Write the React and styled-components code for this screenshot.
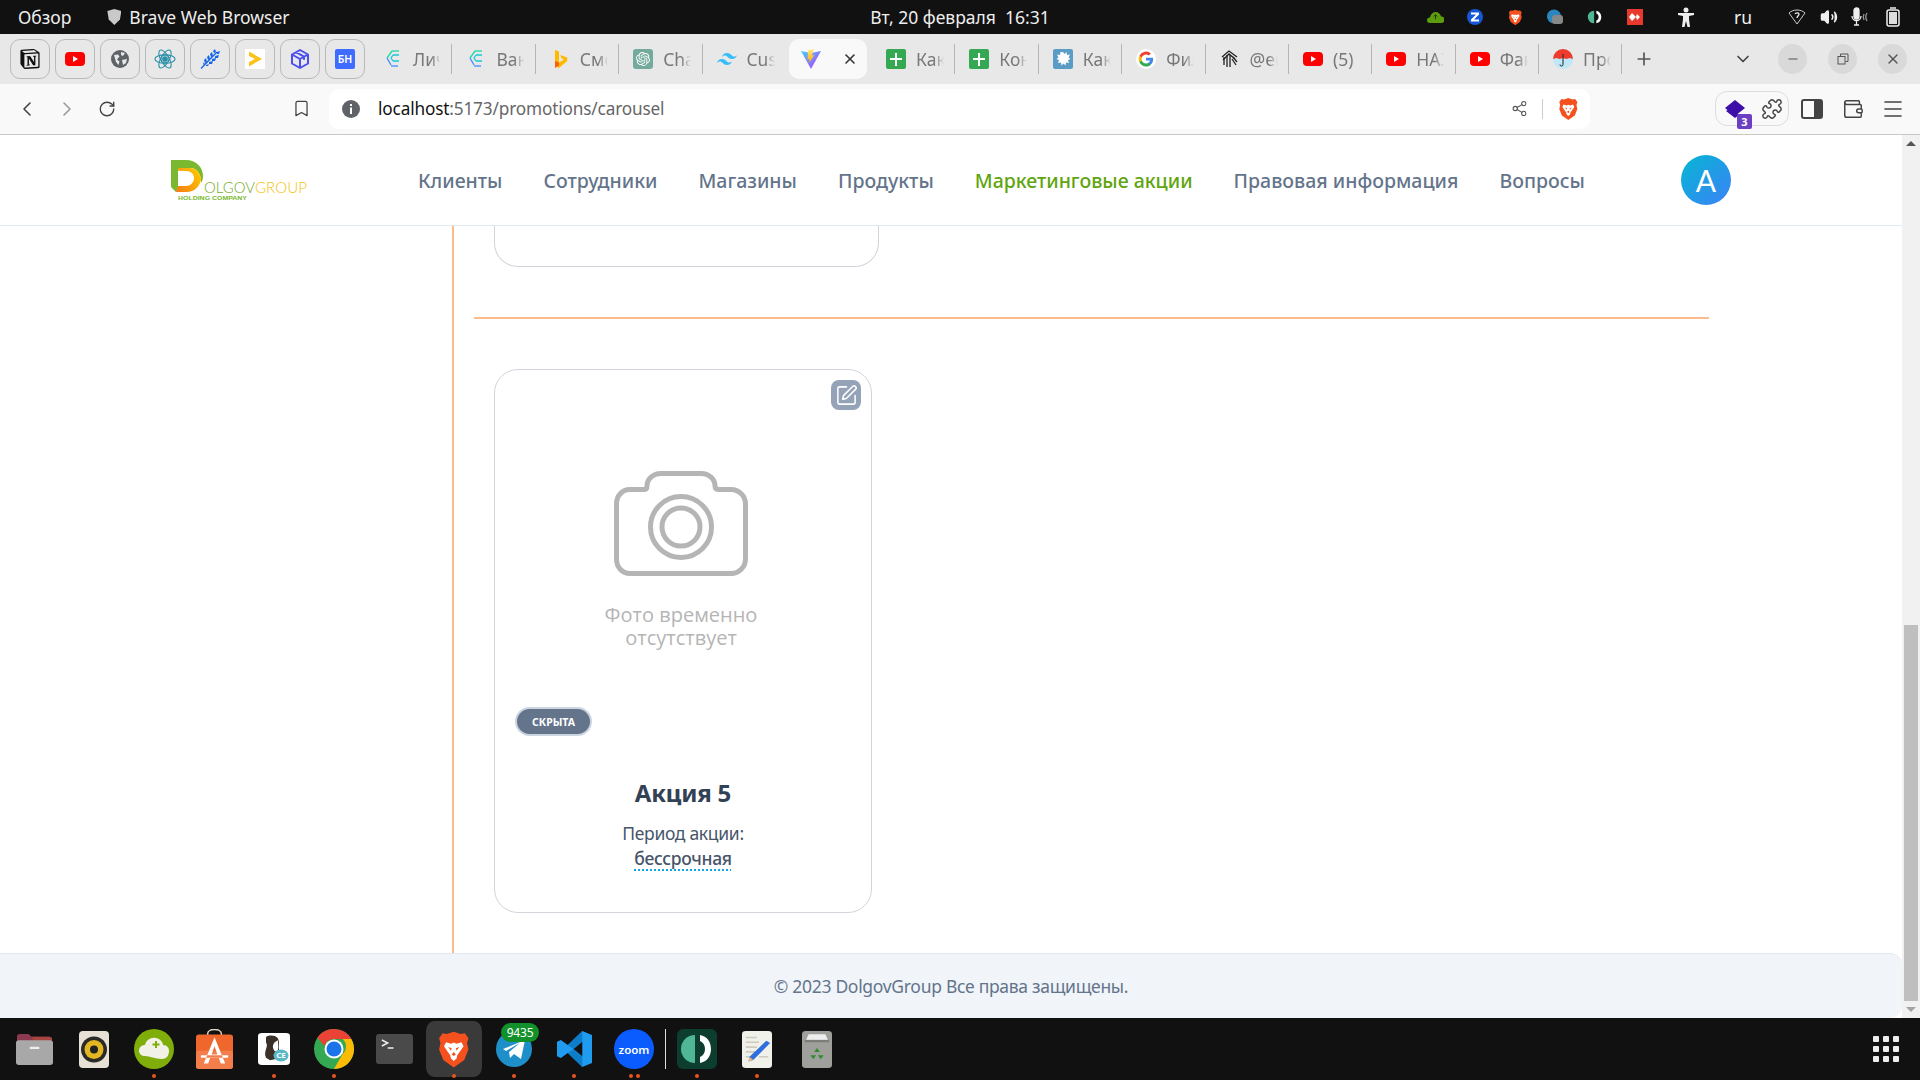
import React from 'react';
import styled, { createGlobalStyle } from 'styled-components';
import { ChevronLeft, ChevronRight, ChevronDown, RotateCw, Bookmark, Share2, Plus, X, Minus, SquarePen, Volume2, Mic, Puzzle, Menu, Wallet } from 'lucide-react';
import { SiNotion, SiOpenai, SiTailwindcss } from 'react-icons/si';

const UI = '"Noto Sans", "Open Sans", sans-serif';

const Global = createGlobalStyle`
  html, body { margin: 0; padding: 0; background: #111; overflow: hidden; }
  * { box-sizing: border-box; }
  body { font-family: ${UI}; }
`;

/* ---------- drawn icons ---------- */
const Yt = ({ s = 20 }) => (
  <svg width={s} height={s} viewBox="0 0 20 20"><rect y="3" width="20" height="14" rx="4" fill="#f00" /><path d="M8 7l5 3-5 3z" fill="#fff" /></svg>
);
const Sheet = ({ s = 20 }) => (
  <svg width={s} height={s} viewBox="0 0 20 20"><rect width="20" height="20" rx="2" fill="#34a853" /><path d="M9 4h2v5h5v2h-5v6H9v-6H4V9h5z" fill="#fff" /></svg>
);
const Brave = ({ s = 20 }) => (
  <svg width={s * 0.86} height={s} viewBox="0 0 24 24" preserveAspectRatio="none">
    <path d="M12 1l5 1.500L20 2l2.500 3-1 3 1 4-3 6.500L12 23l-7.500-4.500L1.500 12l1-4-1-3L4 2l3 .5z" fill="#f4511e" />
    <path d="M6.500 7.500L10 8.500l2-.8 2 .8 3.500-1 1.500 2.500-2.800 3.500-1.700 2-.5 2L12 19l-2-1.500-.5-2-1.700-2L5 10z" fill="#fff" />
    <path d="M8 10.500l2.500.7-.5 1.500zM16 10.500l-2.500.7.500 1.500zM10.500 15l1.500-1.500 1.500 1.500-1.500 1z" fill="#f4511e" />
  </svg>
);
const Bracket = ({ s = 20, bg }) => (
  <svg width={s} height={s} viewBox="0 0 20 20">
    {bg && <rect width="20" height="20" rx="3" fill={bg} />}
    <path d="M9 3a7 7 0 0 0 0 14z" fill="#4fb795" />
    <path d="M11.500 3c3.500.6 5.500 3.500 5.500 7s-2 6.400-5.500 7l0-3c1.500-.6 2.500-2 2.500-4s-1-3.400-2.500-4z" fill="#fff" />
  </svg>
);
const Vite = ({ s = 20 }) => (
  <svg width={s} height={s} viewBox="0 0 20 20">
    <defs>
      <linearGradient id="vt" x1="0" y1="0" x2="1" y2="1"><stop offset="0" stopColor="#41d1ff" /><stop offset="1" stopColor="#bd34fe" /></linearGradient>
      <linearGradient id="vb" x1="0" y1="0" x2="0" y2="1"><stop offset="0" stopColor="#ffea83" /><stop offset="1" stopColor="#ffa800" /></linearGradient>
    </defs>
    <path d="M0 2l10 2 10-2-10 18z" fill="url(#vt)" />
    <path d="M13 0L7 1.500l-.5 9 2-.5-.5 4 5.500-8-2.500.5z" fill="url(#vb)" />
  </svg>
);
const Splat = () => (
  <svg width="20" height="20" viewBox="0 0 20 20">
    <rect width="20" height="20" rx="2" fill="#5a9cc5" />
    <path d="M10 3l1.500 2 2-2 .5 3 3-.5-1.500 3 2 1.500-2.500 1 1 3-3-.5-.5 3-2-2-2 2-.5-3-3 .5 1-3-2.500-1 2-1.500-1.500-3 3 .5.500-3z" fill="#fff" />
  </svg>
);
const Google = () => (
  <svg width="20" height="20" viewBox="0 0 24 24">
    <circle cx="12" cy="12" r="12" fill="#fff" />
    <path d="M20.600 12.200c0-.6-.1-1.200-.2-1.700H12v3.300h4.800a4.100 4.100 0 0 1-1.800 2.700v2.200h2.900c1.700-1.600 2.700-3.900 2.700-6.500z" fill="#4285f4" />
    <path d="M12 21c2.400 0 4.500-.8 5.900-2.200L15 16.500c-.8.500-1.800.9-3 .9-2.300 0-4.300-1.600-5-3.700H4.100V16A9 9 0 0 0 12 21z" fill="#34a853" />
    <path d="M7 13.700a5.400 5.400 0 0 1 0-3.400V8H4.100a9 9 0 0 0 0 8z" fill="#fbbc05" />
    <path d="M12 6.600c1.300 0 2.500.5 3.400 1.300l2.600-2.600A9 9 0 0 0 4.100 8L7 10.300c.7-2.100 2.700-3.700 5-3.700z" fill="#ea4335" />
  </svg>
);
const Cap = () => (
  <svg width="20" height="20" viewBox="0 0 20 20" fill="none" stroke="#222" strokeWidth="1.300">
    <path d="M2 8l7-6 8 6" /><path d="M3 11l6-6 6 5" /><path d="M4 8v8M7 6v12M10 6v12" /><path d="M12 10l4 6M13 8l4 5" />
  </svg>
);
const Umbrella = () => (
  <svg width="20" height="20" viewBox="0 0 20 20">
    <circle cx="10" cy="10" r="10" fill="#bfe7f7" />
    <path d="M0 10a10 10 0 0 1 20 0l-3.300-1-3.300 1-3.400-1-3.400 1-3.300-1z" fill="#ee3b2b" />
    <path d="M10 5v10.500a1.500 1.500 0 0 1-3 0" fill="none" stroke="#222" strokeWidth="1" />
  </svg>
);
const Bing = () => (
  <svg width="20" height="20" viewBox="0 0 20 20">
    <path d="M5 1l4 1.500v11l5-3-2.500-1.200-1.300-3.300 7 2.500v3.500L9 19l-4-2.500z" fill="#ffb900" />
    <path d="M5 12l4 1.500v3L5 19z" fill="#f7630c" />
  </svg>
);
const Cee = () => (
  <svg width="20" height="20" viewBox="0 0 20 20" fill="none" strokeWidth="1.300">
    <path d="M9 2l7 0" stroke="#20d9a5" /><path d="M9 2L4 9" stroke="#20d9a5" />
    <path d="M4 9l4 7" stroke="#3f8cff" /><path d="M8 17h7" stroke="#3f8cff" />
    <path d="M10 6h6M8 9l2-3M8 9l2 3M10 12h6" stroke="#18c8d6" />
  </svg>
);
const Gpt = () => (
  <svg width="20" height="20" viewBox="0 0 20 20"><rect width="20" height="20" rx="3" fill="#74aa9c" /><SiOpenai x="3" y="3" size="14" color="#fff" /></svg>
);
const Tail = () => <SiTailwindcss size={20} color="#38bdf8" />;

const Pin1 = () => <SiNotion size={20} color="#111" />;
const Pin3 = () => (
  <svg width="20" height="20" viewBox="0 0 20 20"><circle cx="10" cy="10" r="9" fill="#5f6368" /><path d="M4 6l4-.5 1.500 2L7 10.500l2.500 2-1 3.500-2.500-3zM11 3l4 1-2 3-2-1zM12 11l5-1-1 4-3 2z" fill="#e8e8e8" /></svg>
);
const Pin4 = () => (
  <svg width="22" height="22" viewBox="0 0 24 24" fill="none" stroke="#2b8fa8" strokeWidth="1.200">
    <circle cx="12" cy="12" r="2.500" fill="#2b8fa8" /><circle cx="12" cy="12" r="4.500" />
    <ellipse cx="12" cy="12" rx="11" ry="4.500" /><ellipse cx="12" cy="12" rx="11" ry="4.500" transform="rotate(60 12 12)" /><ellipse cx="12" cy="12" rx="11" ry="4.500" transform="rotate(120 12 12)" />
  </svg>
);
const Pin5 = () => (
  <svg width="20" height="20" viewBox="0 0 20 20" fill="#1565e8">
    <path d="M1 19.500L17 3" stroke="#1565e8" strokeWidth="1.300" />
    <path d="M13 2l2-2 1 3-2 1zM17 3l3-1-1 3-2 0zM10 5l2-2 1 4-2 1zM15 7l4-1-1 3-3 0zM7 8l2-2 1 4-2 1zM12 10l4-1-1 3-3 0zM4 11l2-2 1 4-2 1zM9 13l4-1-1 3-3 0zM3 15l1-2 1 3-1 0zM6 16l3-1-1 2-2 0z" />
  </svg>
);
const Pin6 = () => (
  <svg width="20" height="20" viewBox="0 0 20 20"><rect width="20" height="20" fill="#fff" /><path d="M4 2.500L17 10 4 17.500l0-4.500L10 10 4 7z" fill="#fcc21b" /></svg>
);
const Pin7 = () => (
  <svg width="20" height="20" viewBox="0 0 20 20" fill="none" stroke="#4c4ef0" strokeWidth="2" strokeLinejoin="round">
    <path d="M10 1l8 4.500v9L10 19l-8-4.500v-9zM2 5.500l8 4.500 8-4.500M10 10v9M6 3.200l8 4.500v3" />
  </svg>
);
const Pin8 = () => (
  <svg width="20" height="20" viewBox="0 0 20 20"><rect width="20" height="20" rx="2" fill="#3d6cff" /><text x="10" y="14" textAnchor="middle" fontSize="10.500" fontWeight="600" fontFamily="Noto Sans, sans-serif" fill="#fff">БН</text></svg>
);

const FolderIco = () => (
  <svg width="37" height="33" viewBox="0 0 38 36" preserveAspectRatio="none">
    <path d="M1 4a3 3 0 0 1 3-3h9l3 3h18a3 3 0 0 1 3 3v6H1z" fill="#8c3a52" />
    <path d="M16 4h18a3 3 0 0 1 3 3v6H20z" fill="#a9453f" />
    <rect x="0" y="8" width="38" height="27" rx="3" fill="#a8a8a8" />
    <rect x="14" y="15" width="10" height="2.500" rx="1" fill="#eee" />
  </svg>
);
const SpeakerIco = () => (
  <svg width="30" height="37" viewBox="0 0 30 37"><rect width="30" height="37" rx="4" fill="#e6e1d4" /><circle cx="15" cy="18.500" r="13" fill="#2a2a26" /><circle cx="15" cy="18.500" r="9.500" fill="#e3b723" /><circle cx="15" cy="18.500" r="4" fill="#222" /></svg>
);
const CloudIco = () => (
  <svg width="40" height="40" viewBox="0 0 40 40"><circle cx="20" cy="20" r="20" fill="#7fae0b" /><path d="M5 22c0-4 3-6 6-6 1-5 6-8 11-7 4 1 7 4 7 7 4 0 6 3 6 6 0 5-3 8-7 8-7 0-12-3-17-3-3 0-6-2-6-5z" fill="#f1f1e8" /><path d="M22 12v7M18.500 15.500h7" stroke="#7fae0b" strokeWidth="2" /></svg>
);
const StoreIco = () => (
  <svg width="37" height="40" viewBox="0 0 38 44" preserveAspectRatio="none">
    <path d="M12 8V5c0-6 14-6 14 0v3" fill="none" stroke="#e3d6c5" strokeWidth="1.500" />
    <rect y="6" width="38" height="38" rx="3" fill="#f0672e" /><rect y="24" width="38" height="20" rx="3" fill="#f47d4c" />
    <path d="M19 9L8 38h4.500l2-6h9l2 6H30zM16 28l3-9 3 9zM5 29h28v2.500H5z" fill="#fff" />
  </svg>
);
const BeaverIco = () => (
  <svg width="32" height="32" viewBox="0 0 32 40" preserveAspectRatio="none">
    <rect width="32" height="40" rx="4" fill="#fff" />
    <path d="M8 5c4-3 10-2 12 2 2 5 0 8 1 14l-1 11-8 2-4-3c-3-8 3-14 0-19z" fill="#3a3028" />
    <path d="M20 9c-5 3-7 8-3 14l3-1z" fill="#fff" />
    <circle cx="23" cy="28" r="7.500" fill="#59b8c6" />
    <text x="23" y="31" textAnchor="middle" fontSize="8" fontWeight="700" fontFamily="Noto Sans, sans-serif" fill="#fff">CE</text>
  </svg>
);
const ChromeIco = () => (
  <svg width="40" height="40" viewBox="0 0 40 40">
    <circle cx="20" cy="20" r="20" fill="#34a853" />
    <path d="M20 0a20 20 0 0 1 17.300 10H20a10 10 0 0 0-9.600 7L3.500 8.500A20 20 0 0 1 20 0z" fill="#ea4335" />
    <path d="M37.300 10A20 20 0 0 1 20 40l8.600-15a10 10 0 0 0 0-15z" fill="#fbbc05" />
    <circle cx="20" cy="20" r="9.500" fill="#fff" /><circle cx="20" cy="20" r="7.500" fill="#1a73e8" />
  </svg>
);
const TermIco = () => (
  <svg width="37" height="30" viewBox="0 0 38 30" preserveAspectRatio="none"><rect width="38" height="30" rx="3" fill="#4a4a4a" /><path d="M6 6l6 3-6 3" fill="none" stroke="#eee" strokeWidth="1.500" /><path d="M12 14h6" stroke="#eee" strokeWidth="1.500" /></svg>
);
const TeleIco = () => (
  <svg width="36" height="36" viewBox="0 0 36 36"><circle cx="18" cy="18" r="18" fill="#1e8fc9" /><path d="M7 18l22-9-4 19-7-5-4 4-1-6 11-9-14 8z" fill="#fff" /></svg>
);
const CodeIco = () => (
  <svg width="35" height="36" viewBox="0 0 36 44" preserveAspectRatio="none">
    <path d="M26 0l10 5v34l-10 5-15-17-7 6-4-2V13l4-2 7 6zM26 13l-9 9 9 9z" fill="#1f9cf0" />
    <path d="M26 0l0 13-9 9-6-5L26 0zM11 27l6-5 9 9v13z" fill="#0065a9" opacity=".55" />
  </svg>
);
const NoteIco = () => (
  <svg width="30" height="37" viewBox="0 0 32 46" preserveAspectRatio="none">
    <rect width="32" height="46" rx="4" fill="#f1f1ec" />
    <path d="M4 8h12M4 14h14M4 20h12M4 26h10M4 32h8M18 32h10" stroke="#cfcabb" strokeWidth="2" />
    <path d="M26 12l4 3-18 21-5 2 1-6z" fill="#2f6fdd" />
    <path d="M8 32l4 4-5 2z" fill="#eeb37a" />
  </svg>
);
const TrashIco = () => (
  <svg width="30" height="37" viewBox="0 0 32 46" preserveAspectRatio="none">
    <rect width="32" height="46" rx="4" fill="#9f9f9b" /><path d="M4 12l3-8h18l3 8z" fill="#eee" /><rect x="3" y="11" width="26" height="3" fill="#7d7d7a" />
    <path d="M16 21l3 5h-6zM23 30l-3 5-3-5zM9 30h6l-3 5z" fill="#2e8b2e" />
  </svg>
);

/* ---------- screen ---------- */
const Screen = styled.div`
  width: 1920px; height: 1080px; display: flex; flex-direction: column; overflow: hidden;
`;

const TopBar = styled.header`
  height: 34px; background: #111; color: #eee; display: grid; grid-template-columns: 1fr auto 1fr;
  align-items: center; font-size: 17.500px; flex: none;
`;
const TopLeft = styled.div`display: flex; align-items: center; padding-left: 18px;`;
const AppName = styled.span`display: flex; align-items: center; gap: 8px; margin-left: 36px;`;
const ShieldMini = styled.span`
  width: 14px; height: 16px; background: #c9c9c9; clip-path: polygon(50% 0, 100% 12%, 90% 65%, 50% 100%, 10% 65%, 0 12%);
`;
const Clock = styled.div`white-space: pre;`;
const Tray = styled.div`display: flex; justify-content: flex-end; align-items: center; padding-right: 19px;`;
const TrayCell = styled.span`
  width: ${p => p.$w || 20}px; height: 20px; margin-left: ${p => p.$ml ?? 20}px; display: flex; align-items: center; justify-content: center; flex: none;
`;

const TabStrip = styled.nav`
  height: 50px; background: #e8e8e8; display: flex; align-items: center; padding-left: 10px; flex: none;
`;
const Pins = styled.div`display: flex; gap: 5px; margin-right: 4px;`;
const Pin = styled.div`
  width: 40px; height: 40px; border: 1.500px solid #b9b9b9; border-radius: 10px; display: flex; align-items: center; justify-content: center;
`;
const Tab = styled.div`
  width: 83.4px; height: 30px; display: flex; align-items: center; padding-left: 14px; gap: 10px; flex: none;
  border-right: ${p => (p.$sep ? '1.500px solid #b5b5b5' : '1.500px solid transparent')};
`;
const ActiveTab = styled.div`
  width: 78px; height: 40px; margin: 0 5px 0 3px; background: #f9f9f9; border-radius: 10px; display: flex; align-items: center; justify-content: space-between; padding: 0 9px 0 12px; flex: none;
  color: #333;
`;
const TabIcon = styled.span`width: 20px; height: 20px; flex: none; display: flex; align-items: center; justify-content: center;`;
const TabTitle = styled.span`
  width: 28px; overflow: hidden; white-space: nowrap; color: #777; font-size: 17.500px; flex: none;
  -webkit-mask-image: linear-gradient(90deg, #000 65%, transparent);
  mask-image: linear-gradient(90deg, #000 65%, transparent);
`;
const NewTab = styled.span`margin-left: 12px; display: flex; color: #555;`;
const TabMenu = styled.span`margin-left: auto; margin-right: 25px; display: flex; color: #444;`;
const WinGroup = styled.div`display: flex; gap: 21px; padding-right: 13px;`;
const WinBtn = styled.span`
  width: 29px; height: 30px; border-radius: 50%; background: #d9d9d9; display: flex; align-items: center; justify-content: center; color: #555;
`;

const Toolbar = styled.div`
  height: 51px; background: #f9f9f9; border-bottom: 1px solid #c8c8c8; display: flex; align-items: center; padding-left: 7px; padding-bottom: 1px; flex: none;
`;
const NavBtn = styled.span`width: 40px; display: flex; justify-content: center; color: ${p => p.$dim ? '#9a9a9a' : '#444'};`;
const BookmarkBtn = styled.span`margin-left: 164px; width: 20px; display: flex; justify-content: center; color: #444;`;
const Omnibox = styled.div`
  margin-left: 18px; width: 1261px; height: 40px; background: #fff; border-radius: 10px; display: flex; align-items: center; padding-left: 13px; flex: none;
`;
const InfoDot = styled.span`
  width: 18px; height: 18px; border-radius: 50%; background: #5f6368; color: #fff; display: flex; align-items: center; justify-content: center; flex: none;
`;
const Url = styled.span`margin-left: 18px; font-size: 17.200px; letter-spacing: -0.15px; color: #666;`;
const UrlHost = styled.span`color: #111;`;
const OmniEnd = styled.div`margin-left: auto; display: flex; align-items: center; padding-right: 11px; color: #555;`;
const OmniSep = styled.span`width: 1px; height: 20px; background: #ccc; margin: 0 15px 0 14px;`;
const ExtGroup = styled.div`
  margin-left: 125px; width: 74px; height: 35px; border: 1.500px solid #ddd; border-radius: 12px; display: flex; align-items: center; gap: 14px; padding-left: 7px; flex: none; color: #444;
`;
const ExtIcon = styled.span`position: relative; width: 24px; height: 24px; display: flex;`;
const ExtBadge = styled.span`
  position: absolute; right: -5px; bottom: -8px; width: 15px; height: 15px; background: #6b3fc4; color: #fff; border-radius: 2px; font-size: 11px; font-weight: 700; line-height: 15px; text-align: center;
`;
const ToolIcon = styled.span`margin-left: ${p => p.$ml}px; display: flex; color: #444;`;

const Viewport = styled.div`flex: 1; min-height: 0; display: flex; background: #fff;`;
const Page = styled.div`flex: 1; min-width: 0; display: flex; flex-direction: column;`;
const SiteHeader = styled.div`
  height: 91px; flex: none; border-bottom: 1px solid #e2e8f0; display: flex; align-items: center; padding-left: 171px;
`;
const LogoBox = styled.div`width: 136px; height: 41px; flex: none; display: flex;`;
const SiteNav = styled.div`display: flex; gap: 41px; margin-left: 111px; flex: none;`;
const NavLink = styled.a`
  font-size: 19.500px; font-weight: 500; color: ${p => (p.$active ? '#5fa50f' : '#64748b')}; white-space: nowrap;
`;
const Avatar = styled.div`
  width: 50px; height: 50px; border-radius: 50%; margin-left: auto; margin-right: 171px; flex: none;
  background: linear-gradient(135deg, #06b6d4, #3b82f6); color: #fff; font-size: 30px; display: flex; align-items: center; justify-content: center; font-family: "Lato", sans-serif;
`;

const Main = styled.main`flex: 1; min-height: 0; display: flex; padding-left: 452px;`;
const Column = styled.div`
  flex: 1; border-left: 2px solid #fdba8c; padding: 0 193px 0 20px;
`;
const CardStub = styled.div`
  margin-left: 20px; width: 385px; height: 41px; border: 1px solid #d1d5db; border-top: 0; border-radius: 0 0 24px 24px;
`;
const Rule = styled.hr`
  margin: 50px 0 0; height: 2px; border: 0; background: #fdba8c;
`;
const Card = styled.article`
  position: relative; margin: 50px 0 0 20px; width: 378px; height: 544px; border: 1px solid #d1d5db; border-radius: 24px; display: flex; flex-direction: column; align-items: center;
`;
const EditBtn = styled.button`
  position: absolute; top: 10px; right: 10px; width: 30px; height: 30px; border: 0; padding: 0; border-radius: 8px; background: #94a3b8; color: #fff; display: flex; align-items: center; justify-content: center;
`;
const Placeholder = styled.div`
  width: 372px; align-self: flex-start; padding-top: 101px; display: flex; flex-direction: column; align-items: center;
`;
const NoPhoto = styled.div`
  margin-top: 27px; font-family: "Open Sans", sans-serif; font-size: 20px; line-height: 23px; color: #b5b5b5; text-align: center; width: 190px;
`;
const Badge = styled.span`
  align-self: flex-start; margin: 60px 0 0 22px; height: 25px; width: 73px; border-radius: 13px; background: #64748b; box-shadow: 0 0 0 2px #cbd5e1; color: #fff; font-size: 10.500px; font-weight: 700; display: flex; align-items: center; justify-content: center; text-transform: uppercase;
`;
const Title = styled.h3`
  margin: 43px 0 0; font-size: 24px; line-height: 32px; font-weight: 700; color: #334155; letter-spacing: -0.2px;
`;
const Period = styled.p`
  margin: 12px 0 0; font-size: 17.500px; line-height: 25px; color: #475569; text-align: center; letter-spacing: -0.3px;
`;
const Forever = styled.span`
  font-weight: 500; display: block; text-decoration: underline dotted #0ea5e9 2px; text-underline-offset: 4px;
`;
const Footer = styled.footer`
  height: 65px; flex: none; background: #f1f5f9; border-top: 1px solid #e2e8f0; border-top-right-radius: 12px; border-bottom-right-radius: 12px; display: flex; align-items: center; justify-content: center; padding-bottom: 1px; font-size: 17.500px; letter-spacing: -0.3px; color: #64748b;
`;
const Scrollbar = styled.aside`
  width: 18px; flex: none; background: #f1f1f1; display: flex; flex-direction: column; align-items: center;
`;
const ArrowCell = styled.span`
  height: 17px; flex: none; display: flex; align-items: center; justify-content: center;
  &::before { content: ''; border: 5px solid transparent; border-top: 0; border-bottom: 5px solid ${p => p.$down ? '#a3a3a3' : '#555'}; transform: ${p => p.$down ? 'rotate(180deg)' : 'none'}; }
`;
const Track = styled.span`flex: 1; display: flex; align-items: flex-end; align-self: stretch; justify-content: center;`;
const Thumb = styled.span`width: 14px; height: 376px; background: #bfbfbf;`;

const Dock = styled.footer`
  height: 62px; flex: none; background: #111; display: flex; align-items: center; padding-left: 4px;
`;
const Slot = styled.div`
  position: relative; width: 60px; height: 56px; flex: none; display: flex; align-items: center; justify-content: center;
  ${p => p.$active && 'background: #3a3a3a; border-radius: 10px; background-clip: content-box; padding: 0 2px;'}
`;
const RunDots = styled.span`
  position: absolute; bottom: -1px; left: 0; right: 0; display: flex; justify-content: center; gap: 3px;
  & > i { width: 4px; height: 4px; border-radius: 50%; background: #e9541f; display: block; }
`;
const Count = styled.span`
  position: absolute; top: 2px; left: 17px; width: 38px; height: 19px; background: #12912b; color: #fff; border-radius: 10px; font-size: 12px; display: flex; align-items: center; justify-content: center; letter-spacing: -0.2px;
`;
const ZoomBlob = styled.div`
  width: 40px; height: 40px; border-radius: 50%; background: #0b5cff; color: #fff; font-size: 11.500px; font-weight: 600; display: flex; align-items: center; justify-content: center;
`;
const DockSep = styled.span`width: 1px; height: 40px; background: #ddd; margin: 0 1px; flex: none;`;
const AppsGrid = styled.div`
  margin-left: auto; margin-right: 21px; display: grid; grid-template-columns: repeat(3, 6px); gap: 4px;
  & > i { width: 6px; height: 6px; background: #eee; border-radius: 1px; display: block; }
`;

const Dots = ({ n = 1 }) => <RunDots>{Array.from({ length: n }, (_, i) => <i key={i} />)}</RunDots>;

const pinned = [Pin1, () => <Yt />, Pin3, Pin4, Pin5, Pin6, Pin7, Pin8];
const tabsA = [[Cee, 'Личный'], [Cee, 'Вакансии'], [Bing, 'Смотреть'], [Gpt, 'ChatGPT'], [Tail, 'Customize']];
const tabsB = [[Sheet, 'Как'], [Sheet, 'Контакты'], [Splat, 'Как'], [Google, 'Фильмы'], [Cap, '@eng'], [Yt, '(5)'], [Yt, 'НАЗАД'], [Yt, 'Фан'], [Umbrella, 'Прогноз']];

const Logo = () => (
  <svg width="136" height="41" viewBox="0 0 136 41">
    <defs><linearGradient id="dg" x1="0" y1="1" x2="1" y2="0.300"><stop offset="0" stopColor="#f47b16" /><stop offset="1" stopColor="#ffc400" /></linearGradient></defs>
    <path d="M0 0h15c10 0 17 7 17 16 0 3-.6 5-2 7 .6-7-3-15-11-15H7v20l-2 4-5-5z" fill="#7ab92f" />
    <path d="M7 8h12c6 0 11 5 11 12l-1 3c-2 5-7 9-13 9H5l2-6h8c5 0 8-4 8-8s-3-7-8-7l-8-.2z" fill="url(#dg)" />
    <text x="33" y="33" fontFamily="Lato, Liberation Sans, sans-serif" fontWeight="300" fontSize="16" fill="#74ab2c" textLength="51" lengthAdjust="spacingAndGlyphs">OLGOV</text>
    <text x="84" y="33" fontFamily="Lato, Liberation Sans, sans-serif" fontWeight="300" fontSize="16" fill="#f4c20d" textLength="52" lengthAdjust="spacingAndGlyphs">GROUP</text>
    <text x="7" y="40" fontFamily="Liberation Sans, sans-serif" fontWeight="700" fontSize="5.500" fill="#7ab92f" textLength="69" lengthAdjust="spacingAndGlyphs">HOLDING COMPANY</text>
  </svg>
);

const Camera = () => (
  <svg width="134" height="105" viewBox="0 0 134 105" fill="none" stroke="#b5b5b5" strokeWidth="5">
    <path d="M16 18.500H30Q33 18.500 33 15C33 8 39 2.500 47 2.500H87C95 2.500 101 8 101 15Q101 18.500 105 18.500H117C125 18.500 131.500 25 131.500 33V88C131.500 96 125 102.500 117 102.500H16C8 102.500 2.500 96 2.500 88V33C2.500 25 8 18.500 16 18.500Z" />
    <circle cx="67" cy="56" r="30.500" />
    <circle cx="67" cy="56" r="19" />
  </svg>
);

export default function App() {
  return (
    <Screen>
      <Global />
      <TopBar>
        <TopLeft>
          <span>Обзор</span>
          <AppName><ShieldMini />Brave Web Browser</AppName>
        </TopLeft>
        <Clock>Вт, 20 февраля  16:31</Clock>
        <Tray>
          <TrayCell $ml={0}>
            <svg width="17" height="11" viewBox="0 0 18 12" preserveAspectRatio="none"><path d="M3 12a3 3 0 0 1 0-6c1-4 4-6 6-6 3 0 5 2 6 5a3.500 3.500 0 0 1 0 7z" fill="#5d9c0c" /><path d="M9 3v5M7 5l2-2 2 2" stroke="#1b3a00" fill="none" /></svg>
          </TrayCell>
          <TrayCell>
            <svg width="16" height="16" viewBox="0 0 16 16"><circle cx="8" cy="8" r="8" fill="#1557d6" /><path d="M4 3.500h8v2L7 10.500h5v2H4v-2l5-5H4z" fill="#fff" /></svg>
          </TrayCell>
          <TrayCell><Brave s={17} /></TrayCell>
          <TrayCell>
            <svg width="16" height="16" viewBox="0 0 16 16"><circle cx="7" cy="7.500" r="7" fill="#2a86bf" /><rect x="5" y="6" width="11" height="9" rx="3" fill="#888" /></svg>
          </TrayCell>
          <TrayCell><Bracket s={18} /></TrayCell>
          <TrayCell>
            <svg width="16" height="16" viewBox="0 0 16 16"><rect width="16" height="16" fill="#e8392f" /><path d="M5 4l4 4-4 4-3-4zM10 5l3 3-3 3-1-3z" fill="#fff" /></svg>
          </TrayCell>
          <TrayCell $ml={31}>
            <svg width="16" height="20" viewBox="0 0 16 20" fill="#eee"><circle cx="8" cy="3" r="2.500" /><path d="M0 6h16v2l-5 1v3l1 8h-2.500L8 14l-1.500 6H4l1-8V9L0 8z" /></svg>
          </TrayCell>
          <TrayCell $ml={37}>ru</TrayCell>
          <TrayCell $ml={34}>
            <svg width="18" height="16" viewBox="0 0 18 16" fill="none" stroke="#ccc"><path d="M1 4c4-4 12-4 16 0l-8 11z" /><path d="M7 5c1-2 4-1 4 0 0 2-2 2-2 4" stroke="#eee" strokeWidth="1.300" /></svg>
          </TrayCell>
          <TrayCell $ml={12}><Volume2 size={18} fill="#eee" /></TrayCell>
          <TrayCell $ml={11}>
            <svg width="20" height="20" viewBox="0 0 20 20" fill="none" stroke="#eee" strokeWidth="1.300"><rect x="4" y="1" width="5" height="11" rx="2.500" fill="#eee" /><path d="M2 9a4.500 4.500 0 0 0 9 0M6.500 14v4M4 18h5" /><path d="M14 7c-1 2-1 4 0 6M17 6c-1.500 2.500-1.500 5.500 0 8" stroke="#999" /></svg>
          </TrayCell>
          <TrayCell $ml={15} $w={16}>
            <svg width="14" height="20" viewBox="0 0 14 20" fill="none" stroke="#eee" strokeWidth="1.500"><rect x="1" y="3" width="12" height="16" rx="2" /><path d="M4 1h6" /><rect x="3" y="5" width="8" height="12" fill="#ddd" stroke="none" /></svg>
          </TrayCell>
        </Tray>
      </TopBar>

      <TabStrip>
        <Pins>
          {pinned.map((P, i) => <Pin key={i}><P /></Pin>)}
        </Pins>
        {tabsA.map(([I, t], i) => (
          <Tab key={i} $sep={i < 4}><TabIcon><I /></TabIcon><TabTitle>{t}</TabTitle></Tab>
        ))}
        <ActiveTab><TabIcon><Vite /></TabIcon><X size={16} strokeWidth={2.4} /></ActiveTab>
        {tabsB.map(([I, t], i) => (
          <Tab key={i} $sep><TabIcon><I /></TabIcon><TabTitle>{t}</TabTitle></Tab>
        ))}
        <NewTab><Plus size={20} /></NewTab>
        <TabMenu><ChevronDown size={20} /></TabMenu>
        <WinGroup>
          <WinBtn><Minus size={14} /></WinBtn>
          <WinBtn>
            <svg width="12" height="12" viewBox="0 0 12 12" fill="none" stroke="#555"><rect x="1" y="3.500" width="7" height="7.500" /><path d="M3.500 3V1H11v7.500H8.500" /></svg>
          </WinBtn>
          <WinBtn><X size={16} /></WinBtn>
        </WinGroup>
      </TabStrip>

      <Toolbar>
        <NavBtn><ChevronLeft size={24} strokeWidth={1.6} /></NavBtn>
        <NavBtn $dim><ChevronRight size={24} strokeWidth={1.6} /></NavBtn>
        <NavBtn><RotateCw size={18} strokeWidth={1.8} /></NavBtn>
        <BookmarkBtn><Bookmark size={19} strokeWidth={1.6} /></BookmarkBtn>
        <Omnibox>
          <InfoDot>
            <svg width="4" height="10" viewBox="0 0 4 10" fill="#fff"><rect x="1" width="2" height="2" /><rect x="1" y="3.500" width="2" height="6.500" /></svg>
          </InfoDot>
          <Url><UrlHost>localhost</UrlHost>:5173/promotions/carousel</Url>
          <OmniEnd>
            <Share2 size={17} strokeWidth={1.5} />
            <OmniSep />
            <Brave s={24} />
          </OmniEnd>
        </Omnibox>
        <ExtGroup>
          <ExtIcon>
            <svg width="24" height="24" viewBox="0 0 24 24"><path d="M12 3l10 8-10 8-10-8z" fill="#3d0ea8" /><path d="M3 14l9 7 4-3-8-7z" fill="#3d0ea8" /></svg>
            <ExtBadge>3</ExtBadge>
          </ExtIcon>
          <Puzzle size={22} strokeWidth={1.6} />
        </ExtGroup>
        <ToolIcon $ml={12}>
          <svg width="22" height="20" viewBox="0 0 22 20"><rect x="1" y="1" width="20" height="18" rx="2" fill="none" stroke="#444" strokeWidth="2" /><rect x="13" y="1" width="8" height="18" fill="#444" /></svg>
        </ToolIcon>
        <ToolIcon $ml={19}><Wallet size={22} strokeWidth={1.6} /></ToolIcon>
        <ToolIcon $ml={17}><Menu size={24} strokeWidth={1.6} /></ToolIcon>
      </Toolbar>

      <Viewport>
        <Page>
          <SiteHeader>
            <LogoBox><Logo /></LogoBox>
            <SiteNav>
              <NavLink>Клиенты</NavLink>
              <NavLink>Сотрудники</NavLink>
              <NavLink>Магазины</NavLink>
              <NavLink>Продукты</NavLink>
              <NavLink $active>Маркетинговые акции</NavLink>
              <NavLink>Правовая информация</NavLink>
              <NavLink>Вопросы</NavLink>
            </SiteNav>
            <Avatar>A</Avatar>
          </SiteHeader>
          <Main>
            <Column>
              <CardStub />
              <Rule />
              <Card>
                <EditBtn aria-label="edit"><SquarePen size={23} strokeWidth={1.6} /></EditBtn>
                <Placeholder>
                  <Camera />
                  <NoPhoto>Фото временно отсутствует</NoPhoto>
                </Placeholder>
                <Badge>Скрыта</Badge>
                <Title>Акция 5</Title>
                <Period>Период акции:<Forever>бессрочная</Forever></Period>
              </Card>
            </Column>
          </Main>
          <Footer>© 2023 DolgovGroup Все права защищены.</Footer>
        </Page>
        <Scrollbar>
          <ArrowCell />
          <Track><Thumb /></Track>
          <ArrowCell $down />
        </Scrollbar>
      </Viewport>

      <Dock>
        <Slot><FolderIco /></Slot>
        <Slot><SpeakerIco /></Slot>
        <Slot><CloudIco /><Dots /></Slot>
        <Slot><StoreIco /></Slot>
        <Slot><BeaverIco /><Dots /></Slot>
        <Slot><ChromeIco /><Dots /></Slot>
        <Slot><TermIco /></Slot>
        <Slot $active><Brave s={39} /><Dots /></Slot>
        <Slot><TeleIco /><Count>9435</Count><Dots /></Slot>
        <Slot><CodeIco /><Dots /></Slot>
        <Slot><ZoomBlob>zoom</ZoomBlob><Dots n={2} /></Slot>
        <DockSep />
        <Slot><Bracket s={40} bg="#0c3d2e" /><Dots /></Slot>
        <Slot><NoteIco /><Dots /></Slot>
        <Slot><TrashIco /></Slot>
        <AppsGrid>{Array.from({ length: 9 }, (_, i) => <i key={i} />)}</AppsGrid>
      </Dock>
    </Screen>
  );
}
